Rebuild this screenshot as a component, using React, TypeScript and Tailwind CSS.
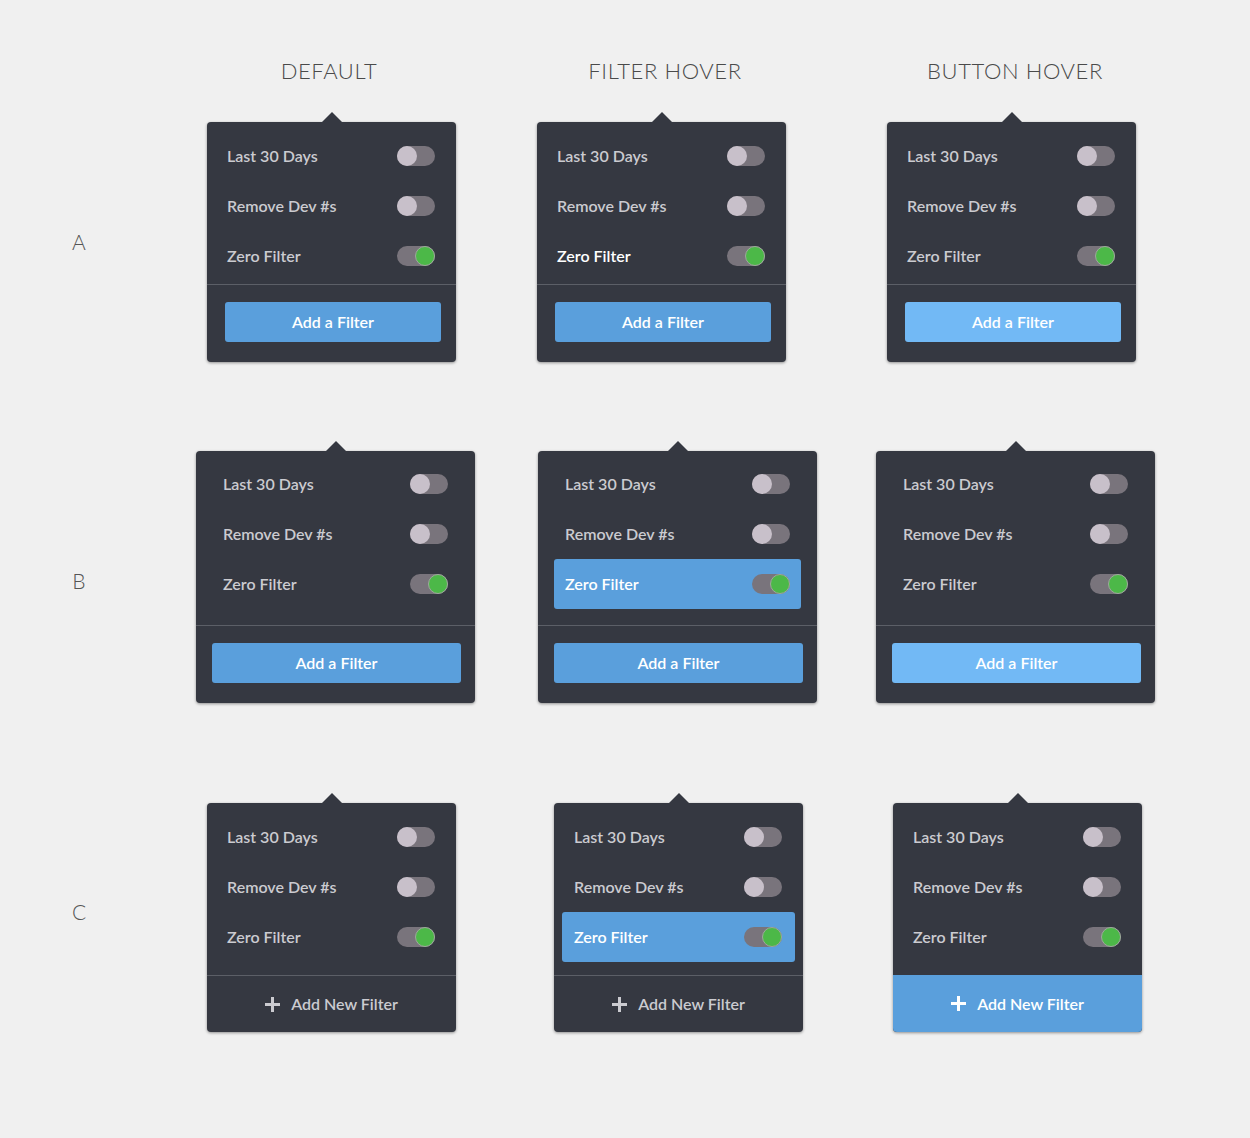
import React from 'react';

type Row = 'A' | 'B' | 'C';
type State = 'default' | 'filter' | 'button';

const FILTERS = [
  { label: 'Last 30 Days', on: false },
  { label: 'Remove Dev #s', on: false },
  { label: 'Zero Filter', on: true },
];

function Toggle({ on }: { on: boolean }) {
  return (
    <div className={`flex h-5 w-[38px] rounded-full bg-[#79747c] ${on ? 'justify-end' : 'justify-start'}`}>
      {on ? (
        <div className="h-5 w-5 rounded-full border border-[#9ea89c] bg-[#4cb848]" />
      ) : (
        <div className="h-5 w-5 rounded-full bg-[#c8c0ca]" />
      )}
    </div>
  );
}

function Plus() {
  return (
    <svg width="15" height="15" viewBox="0 0 15 15">
      <rect x="6" y="0" width="3" height="15" fill="currentColor" />
      <rect x="0" y="6" width="15" height="3" fill="currentColor" />
    </svg>
  );
}

// ── One filter popover, variant by row and state ──────────────────────────────
function Popover({ row, state }: { row: Row; state: State }) {
  const wide = row === 'B';
  const hoverRow = state === 'filter';

  return (
    <div
      className={`relative rounded-[4px] bg-[#353841] shadow-[0_1px_3px_rgba(0,0,0,0.4)] ${
        wide ? 'w-[279px]' : 'w-[249px]'
      }`}
    >
      {/* Caret */}
      <div className="absolute -top-[10px] left-1/2 -ml-[10px] h-0 w-0 border-x-[10px] border-b-[10px] border-x-transparent border-b-[#353841]" />

      <div
        className={
          row === 'A' ? 'px-2 pt-[9px] pb-[3px]' : row === 'B' ? 'px-4 pt-2 pb-4' : 'px-2 pt-[9px] pb-[13px]'
        }
      >
        {FILTERS.map((f) => {
          const active = hoverRow && f.on;
          const highlight = active && row !== 'A';
          return (
            <div
              key={f.label}
              className={`flex h-[50px] items-center justify-between rounded-[3px] ${
                wide ? 'pl-[11px] pr-[11px]' : 'pl-3 pr-[13px]'
              } ${highlight ? 'bg-[#5a9fdc]' : ''}`}
            >
              <span className={`text-[16px] font-semibold ${active ? 'text-white' : 'text-[#cbcbd0]'}`}>
                {f.label}
              </span>
              <Toggle on={f.on} />
            </div>
          );
        })}
      </div>

      {row === 'C' ? (
        <div
          className={`flex h-[57px] items-center justify-center gap-[11px] rounded-b-[4px] text-[16px] font-semibold ${
            state === 'button' ? 'bg-[#5a9fdc] text-white' : 'border-t border-[#5c5f67] text-[#cbcbd0]'
          }`}
        >
          <Plus />
          <span>Add New Filter</span>
        </div>
      ) : (
        <div className={`flex border-t border-[#5c5f67] pt-[17px] pb-5 ${wide ? 'pl-4 pr-[14px]' : 'pl-[18px] pr-[15px]'}`}>
          <button
            className={`h-10 flex-1 rounded-[3px] text-[16px] font-semibold text-white ${
              state === 'button' ? 'bg-[#72b9f5]' : 'bg-[#5a9fdc]'
            }`}
          >
            Add a Filter
          </button>
        </div>
      )}
    </div>
  );
}

function RowLabel({ children, className }: { children: React.ReactNode; className: string }) {
  return (
    <div className={`w-[158px] self-center text-center text-[21px] font-light text-[#555] ${className}`}>{children}</div>
  );
}

export default function App() {
  return (
    <div
      className="h-[1138px] w-[1250px] bg-[#f0f0f0] pt-[54px]"
      style={{ fontFamily: 'Lato, "Open Sans", sans-serif' }}
    >
      {/* Column headings */}
      <div className="flex text-[22px] font-light tracking-[0.6px] text-[#4a4a4a]">
        <div className="ml-[229px] w-[200px] text-center">DEFAULT</div>
        <div className="ml-[136px] w-[200px] text-center">FILTER HOVER</div>
        <div className="ml-[150px] w-[200px] text-center">BUTTON HOVER</div>
      </div>

      {/* Row A */}
      <div className="mt-[35px] flex">
        <RowLabel className="">A</RowLabel>
        <div className="ml-[49px]"><Popover row="A" state="default" /></div>
        <div className="ml-[81px]"><Popover row="A" state="filter" /></div>
        <div className="ml-[101px]"><Popover row="A" state="button" /></div>
      </div>

      {/* Row B */}
      <div className="mt-[89px] flex">
        <RowLabel className="mt-[8px]">B</RowLabel>
        <div className="ml-[38px]"><Popover row="B" state="default" /></div>
        <div className="ml-[63px]"><Popover row="B" state="filter" /></div>
        <div className="ml-[59px]"><Popover row="B" state="button" /></div>
      </div>

      {/* Row C */}
      <div className="mt-[100px] flex">
        <RowLabel className="mb-[12px]">C</RowLabel>
        <div className="ml-[49px]"><Popover row="C" state="default" /></div>
        <div className="ml-[98px]"><Popover row="C" state="filter" /></div>
        <div className="ml-[90px]"><Popover row="C" state="button" /></div>
      </div>
    </div>
  );
}
